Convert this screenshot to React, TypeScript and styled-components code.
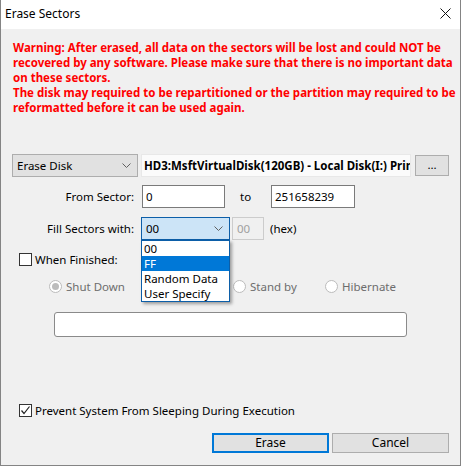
import styled, { createGlobalStyle } from 'styled-components';

const GlobalStyle = createGlobalStyle`
  html, body {
    margin: 0;
    padding: 0;
    background: #ffffff;
  }
  body {
    font-family: "Noto Sans", "DejaVu Sans", sans-serif;
    font-size: 11.5px;
    color: #000000;
  }
`;

const fillOptions = ['00', 'FF', 'Random Data', 'User Specify'];

const Chevron = () => (
  <svg width="9" height="5" viewBox="0 0 9 5">
    <polyline points="0.5,0.5 4.5,4.5 8.5,0.5" fill="none" stroke="#606060" strokeWidth="1" />
  </svg>
);

const CheckMark = () => (
  <svg width="11" height="11" viewBox="0 0 11 11">
    <polyline points="1.5,5.5 4,8.5 9.5,1.5" fill="none" stroke="#222" strokeWidth="1.2" />
  </svg>
);

const App = () => {
  return (
    <>
      <GlobalStyle />
      <Window>
        <TitleBar>
          <span>Erase Sectors</span>
          <svg width="11" height="11" viewBox="0 0 11 11">
            <path d="M0.5 0.5 L10.5 10.5 M10.5 0.5 L0.5 10.5" stroke="#111" strokeWidth="1" />
          </svg>
        </TitleBar>
        <Body>
          <Warning>
            Warning: After erased, all data on the sectors will be lost and could NOT be<br />
            recovered by any software. Please make sure that there is no important data<br />
            on these sectors.<br />
            The disk may required to be repartitioned or the partition may required to be<br />
            reformatted before it can be used again.
          </Warning>

          <Row $top={39}>
            <Combo $width={126}>
              <span>Erase Disk</span>
              <Chevron />
            </Combo>
            <DiskField>HD3:MsftVirtualDisk(120GB) - Local Disk(I:) Prim</DiskField>
            <SmallButton>...</SmallButton>
          </Row>

          <Row $top={8}>
            <FieldLabel>From Sector:</FieldLabel>
            <TextInput $width={83}>0</TextInput>
            <ToLabel>to</ToLabel>
            <TextInput $width={84}>251658239</TextInput>
          </Row>

          <Row $top={9}>
            <FieldLabel>Fill Sectors with:</FieldLabel>
            <ComboWrap>
              <Combo $width={89} $focused>
                <span>00</span>
                <Chevron />
              </Combo>
              <DropList>
                {fillOptions.map((opt) => (
                  <DropItem key={opt} $selected={opt === 'FF'}>
                    {opt}
                  </DropItem>
                ))}
              </DropList>
            </ComboWrap>
            <HexInput>00</HexInput>
            <HexLabel>(hex)</HexLabel>
          </Row>

          <CheckRow $top={13}>
            <CheckBox />
            <span>When Finished:</span>
          </CheckRow>

          <RadioRow>
            <RadioItem>
              <Radio $checked />
              <span>Shut Down</span>
            </RadioItem>
            <RadioItem />
            <RadioItem>
              <Radio />
              <span>Stand by</span>
            </RadioItem>
            <RadioItem>
              <Radio />
              <span>Hibernate</span>
            </RadioItem>
          </RadioRow>

          <StatusBox />

          <Spacer />

          <CheckRow $top={0}>
            <CheckBox>
              <CheckMark />
            </CheckBox>
            <span>Prevent System From Sleeping During Execution</span>
          </CheckRow>

          <ButtonRow>
            <DialogButton $default>Erase</DialogButton>
            <DialogButton>Cancel</DialogButton>
          </ButtonRow>
        </Body>
      </Window>
    </>
  );
};

export default App;

const Window = styled.div`
  width: 461px;
  height: 466px;
  box-sizing: border-box;
  border: 1px solid #848484;
  border-top: none;
  display: flex;
  flex-direction: column;
  overflow: hidden;
`;

const TitleBar = styled.div`
  height: 26px;
  flex: none;
  background: #ffffff;
  display: flex;
  align-items: center;
  justify-content: space-between;
  padding: 0 9px 3px 4px;
  font-size: 12px;
`;

const Body = styled.div`
  flex: 1;
  background: #f0f0f0;
  display: flex;
  flex-direction: column;
  padding: 0 11px 12px 11px;
`;

const Warning = styled.div`
  margin-top: 11px;
  padding-left: 1px;
  color: #ff0000;
  font-weight: bold;
  line-height: 15px;
  white-space: nowrap;
`;

const Row = styled.div<{ $top: number }>`
  display: flex;
  align-items: center;
  margin-top: ${(p) => p.$top}px;
  height: 23px;
`;

const Combo = styled.div<{ $width: number; $focused?: boolean }>`
  width: ${(p) => p.$width}px;
  height: 23px;
  box-sizing: border-box;
  display: flex;
  align-items: center;
  justify-content: space-between;
  padding: 0 6px 0 4px;
  background: ${(p) => (p.$focused ? '#cce4f7' : '#e1e1e1')};
  border: 1px solid ${(p) => (p.$focused ? '#0c5ea8' : '#adadad')};
`;

const DiskField = styled.div`
  width: 270px;
  height: 23px;
  box-sizing: border-box;
  margin-left: 3px;
  padding: 0 0 0 2px;
  background: #fbfbfb;
  border: 1px solid #e8e8e8;
  font-weight: bold;
  line-height: 21px;
  white-space: nowrap;
  overflow: hidden;
`;

const SmallButton = styled.div`
  width: 34px;
  height: 21px;
  box-sizing: border-box;
  margin-left: 4px;
  background: #e1e1e1;
  border: 1px solid #adadad;
  text-align: center;
  line-height: 17px;
`;

const FieldLabel = styled.div`
  width: 122px;
  text-align: right;
`;

const TextInput = styled.div<{ $width: number }>`
  width: ${(p) => p.$width}px;
  height: 23px;
  box-sizing: border-box;
  margin-left: 8px;
  padding-left: 3px;
  background: #ffffff;
  border: 1px solid #7a7a7a;
  line-height: 21px;
`;

const ToLabel = styled.div`
  width: 46px;
  padding-left: 15px;
  box-sizing: border-box;
  margin-right: -8px;
`;

const ComboWrap = styled.div`
  position: relative;
  margin-left: 7px;
  z-index: 2;
`;

const DropList = styled.div`
  position: absolute;
  top: 100%;
  left: 0;
  width: 89px;
  box-sizing: border-box;
  background: #ffffff;
  border: 1px solid #0c5ea8;
  box-shadow: 2px 2px 3px rgba(0, 0, 0, 0.35);
`;

const DropItem = styled.div<{ $selected?: boolean }>`
  height: 15px;
  line-height: 15px;
  padding-left: 2px;
  background: ${(p) => (p.$selected ? '#0078d7' : 'transparent')};
  color: ${(p) => (p.$selected ? '#ffffff' : '#000000')};
`;

const HexInput = styled.div`
  width: 32px;
  height: 23px;
  box-sizing: border-box;
  margin-left: 2px;
  padding-left: 4px;
  border: 1px solid #cccccc;
  background: #f0f0f0;
  color: #a0a0a0;
  line-height: 21px;
`;

const HexLabel = styled.div`
  margin-left: 6px;
`;

const CheckRow = styled.div<{ $top: number }>`
  display: flex;
  align-items: center;
  margin-top: ${(p) => p.$top}px;
  padding-left: 7px;
  gap: 3px;
  height: 13px;
`;

const CheckBox = styled.div`
  width: 13px;
  height: 13px;
  box-sizing: border-box;
  border: 1px solid #333333;
  background: #ffffff;
  display: flex;
  align-items: center;
  justify-content: center;
`;

const RadioRow = styled.div`
  display: grid;
  grid-template-columns: repeat(4, 92px);
  margin-top: 13px;
  padding-left: 37px;
  color: #6d6d6d;
  height: 14px;
  align-items: center;
`;

const RadioItem = styled.div`
  display: flex;
  align-items: center;
  gap: 4px;
`;

const Radio = styled.div<{ $checked?: boolean }>`
  width: 13px;
  height: 13px;
  box-sizing: border-box;
  border-radius: 50%;
  border: 1px solid #bcbcbc;
  background: #ffffff;
  display: flex;
  align-items: center;
  justify-content: center;

  &::after {
    content: '';
    width: 7px;
    height: 7px;
    border-radius: 50%;
    background: ${(p) => (p.$checked ? '#bcbcbc' : 'transparent')};
  }
`;

const StatusBox = styled.div`
  margin: 19px 0 0 42px;
  width: 353px;
  height: 25px;
  box-sizing: border-box;
  border: 1px solid #8a8a8a;
  border-radius: 3px;
  background: #ffffff;
`;

const Spacer = styled.div`
  flex: 1;
`;

const ButtonRow = styled.div`
  display: flex;
  justify-content: flex-end;
  gap: 3px;
  margin-top: 16px;
`;

const DialogButton = styled.div<{ $default?: boolean }>`
  width: 117px;
  height: 20px;
  box-sizing: border-box;
  background: #e1e1e1;
  border: ${(p) => (p.$default ? '2px solid #0078d7' : '1px solid #adadad')};
  text-align: center;
  line-height: ${(p) => (p.$default ? '16px' : '18px')};
  font-size: 12px;
`;
